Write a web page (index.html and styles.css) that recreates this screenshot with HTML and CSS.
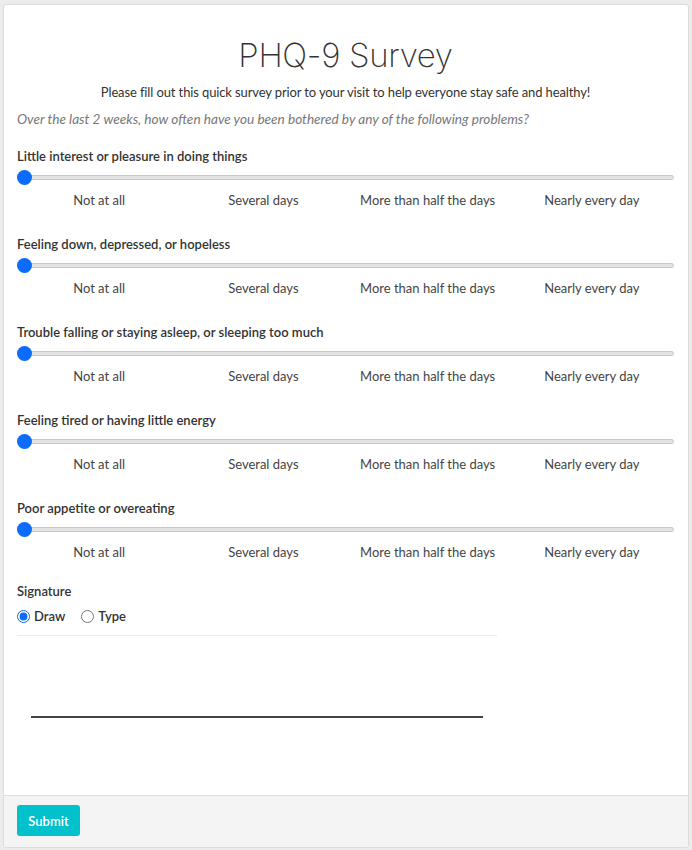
FILE: index.html
```html
<!DOCTYPE html>
<html>
<head>
<meta charset="utf-8">
<link rel="stylesheet" href="styles.css">
</head>
<body>
<div class="card">
  <div class="card-body">
    <h1 class="title">PHQ-9 Survey</h1>
    <p class="intro">Please fill out this quick survey prior to your visit to help everyone stay safe and healthy!</p>
    <p class="prompt">Over the last 2 weeks, how often have you been bothered by any of the following problems?</p>

    <div class="question">
      <div class="q-label">Little interest or pleasure in doing things</div>
      <input class="slider" type="range" min="0" max="3" value="0">
      <div class="ticks"><span>Not at all</span><span>Several days</span><span>More than half the days</span><span>Nearly every day</span></div>
    </div>
    <div class="question">
      <div class="q-label">Feeling down, depressed, or hopeless</div>
      <input class="slider" type="range" min="0" max="3" value="0">
      <div class="ticks"><span>Not at all</span><span>Several days</span><span>More than half the days</span><span>Nearly every day</span></div>
    </div>
    <div class="question">
      <div class="q-label">Trouble falling or staying asleep, or sleeping too much</div>
      <input class="slider" type="range" min="0" max="3" value="0">
      <div class="ticks"><span>Not at all</span><span>Several days</span><span>More than half the days</span><span>Nearly every day</span></div>
    </div>
    <div class="question">
      <div class="q-label">Feeling tired or having little energy</div>
      <input class="slider" type="range" min="0" max="3" value="0">
      <div class="ticks"><span>Not at all</span><span>Several days</span><span>More than half the days</span><span>Nearly every day</span></div>
    </div>
    <div class="question">
      <div class="q-label">Poor appetite or overeating</div>
      <input class="slider" type="range" min="0" max="3" value="0">
      <div class="ticks"><span>Not at all</span><span>Several days</span><span>More than half the days</span><span>Nearly every day</span></div>
    </div>

    <div class="signature">
      <div class="q-label">Signature</div>
      <div class="radios">
        <label class="radio"><input type="radio" name="sig" checked> Draw</label>
        <label class="radio"><input type="radio" name="sig"> Type</label>
      </div>
      <div class="pad">
        <div class="pad-line"></div>
      </div>
    </div>
  </div>
  <div class="card-footer">
    <button class="btn-submit">Submit</button>
  </div>
</div>
</body>
</html>
```
FILE: styles.css
```css
html, body {
  margin: 0;
  padding: 0;
}
body {
  background: #ececec;
  font-family: Lato, "Open Sans", "Liberation Sans", sans-serif;
  color: #333;
  font-size: 13px;
  padding: 4px 3px 3px 3px;
}
.card {
  background: #fff;
  border: 1px solid #dcdcdc;
  border-radius: 3px;
  overflow: hidden;
}
.card-body {
  padding: 28px 14px 0 13px;
}
.title {
  margin: 0;
  font-family: Inter, Lato, sans-serif;
  font-size: 33px;
  line-height: 44px;
  font-weight: 200;
  text-align: center;
  color: #333;
  letter-spacing: -0.35px;
}
.intro {
  margin: 6px 0 0;
  line-height: 18px;
  text-align: center;
  color: #333;
  letter-spacing: -0.12px;
}
.prompt {
  margin: 9px 0 0;
  line-height: 18px;
  font-style: italic;
  font-size: 13.6px;
  color: #777;
}
.question {
  margin-top: 19px;
}
.question + .question {
  margin-top: 26px;
}
.q-label {
  font-weight: 600;
  line-height: 18px;
  color: #333;
}
.slider {
  -webkit-appearance: none;
  appearance: none;
  display: block;
  width: 100%;
  height: 16px;
  margin: 4px 0 0;
  padding: 0;
  background: transparent;
}
.slider::-webkit-slider-runnable-track {
  height: 5px;
  background: #e4e4e4;
  border: 1px solid #c8c8c8;
  border-radius: 4px;
}
.slider::-webkit-slider-thumb {
  -webkit-appearance: none;
  width: 15px;
  height: 15px;
  margin-top: -6px;
  margin-left: -1px;
  border-radius: 50%;
  background: #0b6cfb;
  border: none;
}
.ticks {
  display: grid;
  grid-template-columns: repeat(4, 1fr);
  margin-top: 6px;
  line-height: 18px;
  color: #444;
  text-align: center;
}
.signature {
  margin-top: 21px;
}
.radios {
  display: flex;
  gap: 16px;
  margin-top: 7px;
  line-height: 18px;
  font-weight: 600;
}
.radio {
  display: flex;
  align-items: center;
  gap: 4px;
}
.radio input {
  margin: 0;
  width: 13px;
  height: 13px;
  accent-color: #0b6cfb;
}
.pad {
  width: 480px;
  height: 160px;
  margin-top: 10px;
  border-top: 1px solid #ececec;
  padding: 80px 14px 0;
  box-sizing: border-box;
}
.pad-line {
  height: 2px;
  background: #444;
}
.card-footer {
  background: #f4f4f4;
  border-top: 1px solid #dedede;
  padding: 9px 14px 11px 13px;
}
.btn-submit {
  display: block;
  background: #00c1cc;
  color: #fff;
  border: none;
  border-radius: 3px;
  font-family: inherit;
  font-size: 13px;
  font-weight: 600;
  width: 63px;
  height: 31px;
  padding: 0;
}
```
